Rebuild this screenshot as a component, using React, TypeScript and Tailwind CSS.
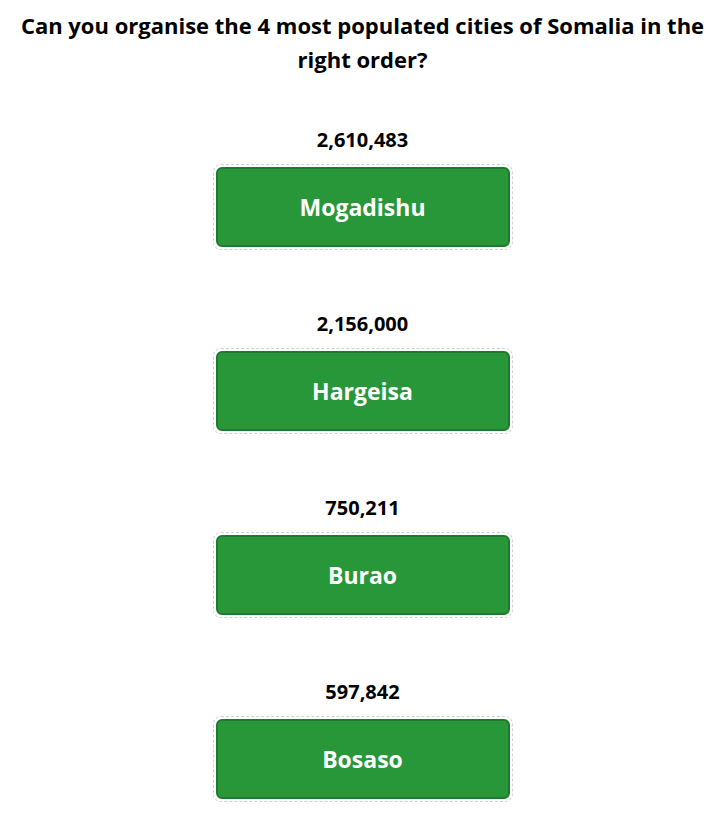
import React from "react";

const items = [
  { pop: "2,610,483", name: "Mogadishu" },
  { pop: "2,156,000", name: "Hargeisa" },
  { pop: "750,211", name: "Burao" },
  { pop: "597,842", name: "Bosaso" },
];

export default function App() {
  return (
    <div
      className="min-h-[815px] w-full bg-white text-black"
      style={{ fontFamily: '"Open Sans", "Noto Sans", sans-serif' }}
    >
      <h1 className="px-1 pt-[8px] text-center text-[22px] font-bold leading-[34px]">
        Can you organise the 4 most populated cities of Somalia in the right order?
      </h1>
      <div className="mt-[51px] flex flex-col items-center gap-[61px]">
        {items.map((it) => (
          <div key={it.name} className="flex flex-col items-center">
            <div className="h-[26px] text-[20px] font-bold leading-[26px]">{it.pop}</div>
            <div className="mt-[11px] rounded-[8px] border border-dashed border-[#cfd4cf] p-[2px]">
              <div className="flex h-[80px] w-[294px] items-center justify-center rounded-[6px] border-2 border-[#1f7a2e] bg-[#28973a] text-[23px] font-bold text-white">
                {it.name}
              </div>
            </div>
          </div>
        ))}
      </div>
    </div>
  );
}
